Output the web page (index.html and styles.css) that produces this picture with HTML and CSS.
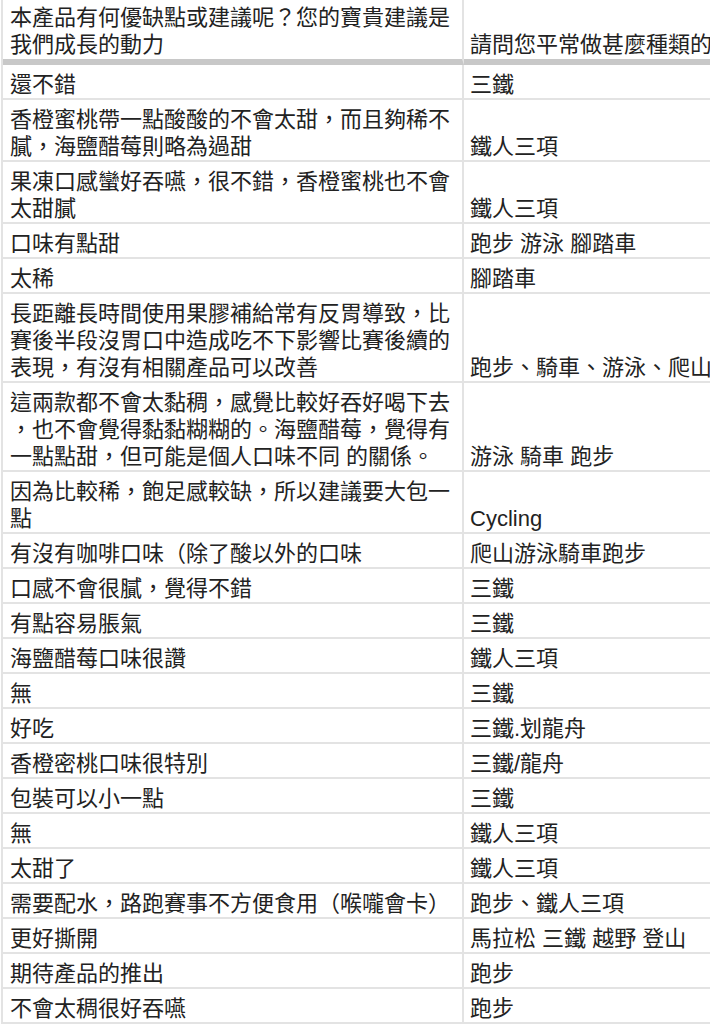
FILE: index.html
```html
<!DOCTYPE html>
<html lang="zh-Hant">
<head>
<meta charset="utf-8">
<title>Sheet</title>
<link rel="stylesheet" href="styles.css">
</head>
<body>
<table class="sheet">
  <colgroup><col class="c1"><col class="c2"></colgroup>
  <tr class="head">
    <td>本產品有何優缺點或建議呢？您的寶貴建議是<br>我們成長的動力</td>
    <td>請問您平常做甚麼種類的</td>
  </tr>
  <tr><td>還不錯</td><td>三鐵</td></tr>
  <tr><td>香橙蜜桃帶一點酸酸的不會太甜，而且夠稀不<br>膩，海鹽醋莓則略為過甜</td><td>鐵人三項</td></tr>
  <tr><td>果凍口感蠻好吞嚥，很不錯，香橙蜜桃也不會<br>太甜膩</td><td>鐵人三項</td></tr>
  <tr><td>口味有點甜</td><td>跑步 游泳 腳踏車</td></tr>
  <tr><td>太稀</td><td>腳踏車</td></tr>
  <tr><td>長距離長時間使用果膠補給常有反胃導致，比<br>賽後半段沒胃口中造成吃不下影響比賽後續的<br>表現，有沒有相關產品可以改善</td><td>跑步、騎車、游泳、爬山</td></tr>
  <tr><td>這兩款都不會太黏稠，感覺比較好吞好喝下去<br>，也不會覺得黏黏糊糊的。海鹽醋莓，覺得有<br>一點點甜，但可能是個人口味不同 的關係。</td><td>游泳 騎車 跑步</td></tr>
  <tr><td>因為比較稀，飽足感較缺，所以建議要大包一<br>點</td><td>Cycling</td></tr>
  <tr><td>有沒有咖啡口味（除了酸以外的口味</td><td>爬山游泳騎車跑步</td></tr>
  <tr><td>口感不會很膩，覺得不錯</td><td>三鐵</td></tr>
  <tr><td>有點容易脹氣</td><td>三鐵</td></tr>
  <tr><td>海鹽醋莓口味很讚</td><td>鐵人三項</td></tr>
  <tr><td>無</td><td>三鐵</td></tr>
  <tr><td>好吃</td><td>三鐵.划龍舟</td></tr>
  <tr><td>香橙密桃口味很特別</td><td>三鐵/龍舟</td></tr>
  <tr><td>包裝可以小一點</td><td>三鐵</td></tr>
  <tr><td>無</td><td>鐵人三項</td></tr>
  <tr><td>太甜了</td><td>鐵人三項</td></tr>
  <tr><td>需要配水，路跑賽事不方便食用（喉嚨會卡）</td><td>跑步、鐵人三項</td></tr>
  <tr><td>更好撕開</td><td>馬拉松 三鐵 越野 登山</td></tr>
  <tr><td>期待產品的推出</td><td>跑步</td></tr>
  <tr><td>不會太稠很好吞嚥</td><td>跑步</td></tr>
</table>
</body>
</html>
```

FILE: styles.css
```css
html, body {
  margin: 0;
  padding: 0;
  background: #ffffff;
  overflow: hidden;
}

.sheet {
  margin-left: 1px;
  border-collapse: separate;
  border-spacing: 0;
  border-left: 2px solid #e3e3e3;
  table-layout: fixed;
  width: 861px;
  font-family: "Liberation Sans", "Noto Sans CJK TC", sans-serif;
  font-size: 22px;
  line-height: 27px;
  color: #222222;
}

.c1 { width: 461px; }
.c2 { width: 400px; }

.sheet td {
  box-sizing: border-box;
  vertical-align: bottom;
  white-space: nowrap;
  overflow: hidden;
  padding: 6px 0 0 0;
  border-right: 2px solid #e3e3e3;
  border-bottom: 2px solid #e3e3e3;
}

.sheet td:first-child {
  padding-left: 7px;
}

.sheet td:last-child {
  padding-left: 6px;
}

.sheet .head td {
  padding-top: 4px;
  padding-bottom: 1px;
  border-bottom: 6px solid #c8c8c8;
}
```
